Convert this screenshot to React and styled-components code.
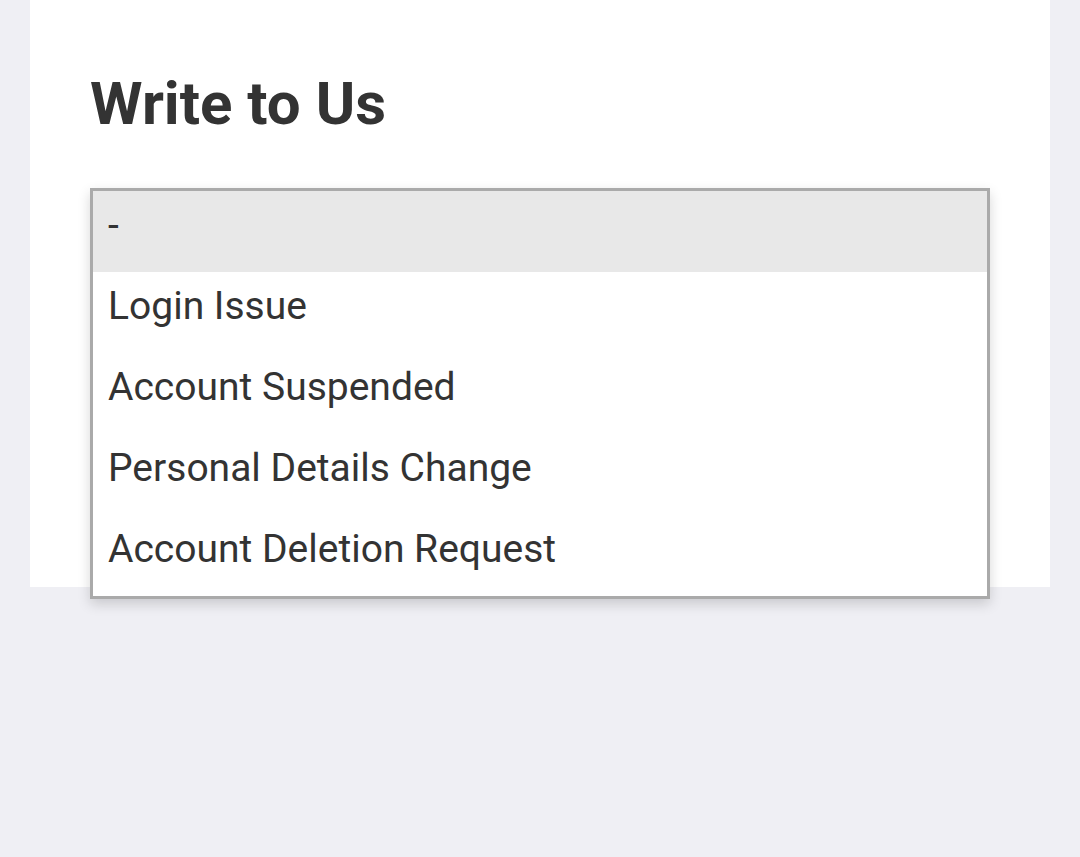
import React from "react";
import styled, { createGlobalStyle } from "styled-components";

const GlobalStyle = createGlobalStyle`
  html, body {
    margin: 0;
    padding: 0;
    background: #efeff4;
    font-family: Roboto, "Liberation Sans", sans-serif;
    color: #333;
  }
`;

export default function App() {
  const options = [
    "-",
    "Login Issue",
    "Account Suspended",
    "Personal Details Change",
    "Account Deletion Request",
  ];
  return (
    <>
      <GlobalStyle />
      <Page>
        <Card>
          <Title>Write to Us</Title>
          <Field>
            <Dropdown>
              {options.map((opt, i) => (
                <Option key={opt} $active={i === 0}>
                  {opt}
                </Option>
              ))}
            </Dropdown>
          </Field>
        </Card>
      </Page>
    </>
  );
}

const Page = styled.div`
  min-height: 857px;
  padding: 0 30px;
`;

const Card = styled.section`
  background: #fff;
  height: 587px;
  box-sizing: border-box;
  padding: 69px 60px 0;
`;

const Title = styled.h1`
  margin: 0;
  font-size: 60px;
  font-weight: 700;
  line-height: 70px;
  color: #333;
`;

const Field = styled.div`
  position: relative;
  margin-top: 49px;
`;

const Dropdown = styled.ul`
  position: absolute;
  top: 0;
  left: 0;
  right: 0;
  margin: 0;
  padding: 0;
  list-style: none;
  background: #fff;
  border: 3px solid #aaa;
  box-shadow: 0 5px 12px rgba(0, 0, 0, 0.16);
`;

const Option = styled.li`
  height: 81px;
  box-sizing: border-box;
  padding: 13px 15px 0;
  font-size: 39px;
  line-height: 43px;
  color: #333;
  background: ${(p) => (p.$active ? "#e8e8e8" : "#fff")};
`;
